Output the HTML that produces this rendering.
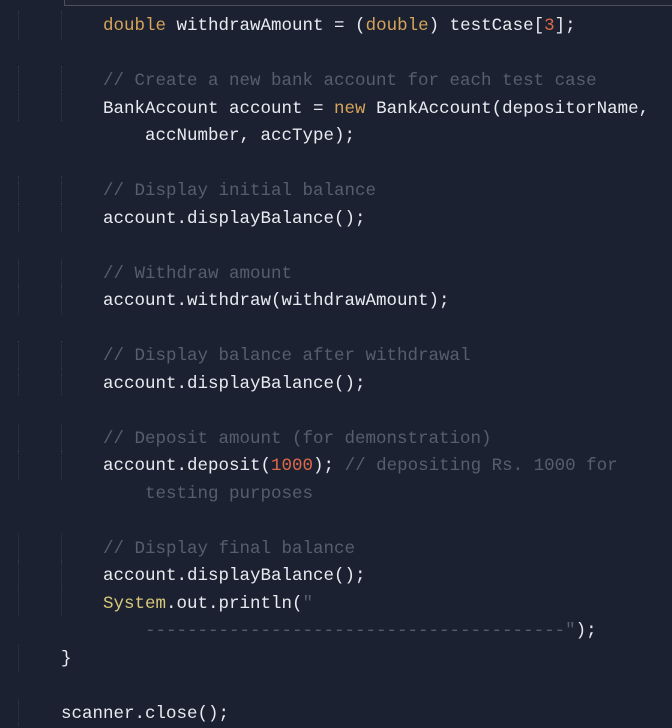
<!DOCTYPE html>
<html><head><meta charset="utf-8"><style>
body{margin:0;width:672px;height:728px;background:#1b2130;overflow:hidden;position:relative;font-family:"Liberation Mono",monospace;font-size:17.5px;color:#e8eaf0}
.l{position:absolute;left:0;height:27.5px;line-height:27.5px;white-space:pre;width:672px;margin-top:2px}
.g1,.g2{position:absolute;top:-2px;height:27.5px;border-left:1px dotted #33394a}
.g1{left:18px}.g2{left:61px}
.k{color:#d6a45a}.c{color:#575e6b}.n{color:#e0694a}.s{color:#d8c878}
.t{position:absolute;top:0}
.box{position:absolute;left:64px;top:-2px;width:620px;height:7px;border-left:1px solid #4a4f5a;border-bottom:1px solid #4a4f5a;background:#1f2533}
</style></head><body>
<div class="box"></div>
<div class="l" style="top:11px"><span class="g1"></span><span class="g2"></span><span class="t" style="left:103px"><span class="k">double</span> withdrawAmount = (<span class="k">double</span>) testCase[<span class="n">3</span>];</span></div>
<div class="l" style="top:66px"><span class="g1"></span><span class="g2"></span><span class="t c" style="left:103px">// Create a new bank account for each test case</span></div>
<div class="l" style="top:93.5px"><span class="g1"></span><span class="g2"></span><span class="t" style="left:103px">BankAccount account = <span class="k">new</span> BankAccount(depositorName,</span></div>
<div class="l" style="top:121px"><span class="t" style="left:145px">accNumber, accType);</span></div>
<div class="l" style="top:176px"><span class="g1"></span><span class="g2"></span><span class="t c" style="left:103px">// Display initial balance</span></div>
<div class="l" style="top:203.5px"><span class="g1"></span><span class="g2"></span><span class="t" style="left:103px">account.displayBalance();</span></div>
<div class="l" style="top:258.5px"><span class="g1"></span><span class="g2"></span><span class="t c" style="left:103px">// Withdraw amount</span></div>
<div class="l" style="top:286px"><span class="g1"></span><span class="g2"></span><span class="t" style="left:103px">account.withdraw(withdrawAmount);</span></div>
<div class="l" style="top:341px"><span class="g1"></span><span class="g2"></span><span class="t c" style="left:103px">// Display balance after withdrawal</span></div>
<div class="l" style="top:368.5px"><span class="g1"></span><span class="g2"></span><span class="t" style="left:103px">account.displayBalance();</span></div>
<div class="l" style="top:423.5px"><span class="g1"></span><span class="g2"></span><span class="t c" style="left:103px">// Deposit amount (for demonstration)</span></div>
<div class="l" style="top:451px"><span class="g1"></span><span class="g2"></span><span class="t" style="left:103px">account.deposit(<span class="n">1000</span>); <span class="c">// depositing Rs. 1000 for</span></span></div>
<div class="l" style="top:478.5px"><span class="t c" style="left:145px">testing purposes</span></div>
<div class="l" style="top:533.5px"><span class="g1"></span><span class="g2"></span><span class="t c" style="left:103px">// Display final balance</span></div>
<div class="l" style="top:561px"><span class="g1"></span><span class="g2"></span><span class="t" style="left:103px">account.displayBalance();</span></div>
<div class="l" style="top:588.5px"><span class="g1"></span><span class="g2"></span><span class="t" style="left:103px"><span class="s">System</span>.out.println(<span class="c">"</span></span></div>
<div class="l" style="top:616px"><span class="t" style="left:145px"><span class="c">----------------------------------------"</span>);</span></div>
<div class="l" style="top:643.5px"><span class="g1"></span><span class="t" style="left:61px">}</span></div>
<div class="l" style="top:698.5px"><span class="g1"></span><span class="t" style="left:61px">scanner.close();</span></div>
</body></html>
